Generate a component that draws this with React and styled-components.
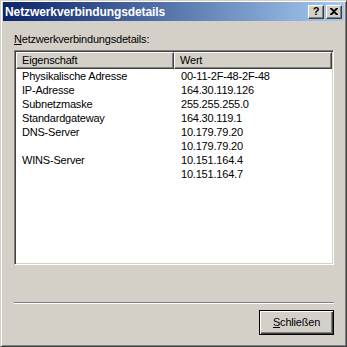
import React from "react";
import styled, { createGlobalStyle } from "styled-components";

const Global = createGlobalStyle`
  html, body { margin: 0; padding: 0; background: #D4D0C8; }
  * { box-sizing: border-box; }
`;

const Window = styled.div`
  width: 347px;
  height: 347px;
  background: #d4d0c8;
  border: 1px solid;
  border-color: #d4d0c8 #404040 #404040 #d4d0c8;
  box-shadow: inset 1px 1px #ffffff, inset -1px -1px #808080;
  padding: 1px 2px 2px 2px;
  display: flex;
  flex-direction: column;
  font-family: "Liberation Sans", Arial, sans-serif;
  font-size: 11px;
  letter-spacing: -0.2px;
  color: #000;
`;

const TitleBar = styled.div`
  height: 19px;
  flex: none;
  display: flex;
  align-items: center;
  padding: 0 2px 0 2px;
  background: linear-gradient(to right, #0a246a, #a6caf0);
`;

const Title = styled.div`
  flex: 1;
  color: #fff;
  font-weight: bold;
  font-size: 12px;
  letter-spacing: -0.1px;
  white-space: nowrap;
`;

const TitleButtons = styled.div`
  display: flex;
  gap: 2px;
`;

const CaptionButton = styled.div`
  width: 16px;
  height: 14px;
  background: #d4d0c8;
  border: 1px solid;
  border-color: #ffffff #404040 #404040 #ffffff;
  box-shadow: inset -1px -1px #808080;
  display: flex;
  align-items: center;
  justify-content: center;
  font-weight: bold;
  font-size: 11px;
  line-height: 1;
`;

const Body = styled.div`
  flex: 1;
  display: flex;
  flex-direction: column;
  padding: 11px 10px 0 11px;
`;

const Label = styled.div`
  line-height: 14px;
  height: 14px;
  margin-bottom: 4px;
`;

const Acc = styled.span`
  text-decoration: underline;
`;

const ListBox = styled.div`
  height: 215px;
  background: #fff;
  border: 1px solid;
  border-color: #808080 #ffffff #ffffff #808080;
  box-shadow: inset 1px 1px #404040, inset -1px -1px #d4d0c8;
  padding: 1px;
  display: flex;
  flex-direction: column;
`;

const Header = styled.div`
  display: grid;
  grid-template-columns: 158px 1fr;
  height: 17px;
  flex: none;
`;

const HeaderCell = styled.div`
  background: #d4d0c8;
  border: 1px solid;
  border-color: #ffffff #404040 #404040 #ffffff;
  box-shadow: inset -1px -1px #808080;
  padding-left: 5px;
  line-height: 14px;
  white-space: nowrap;
`;

const Row = styled.div`
  display: grid;
  grid-template-columns: 158px 1fr;
  height: 14px;
  line-height: 14px;
`;

const Cell = styled.div`
  padding-left: ${(p) => p.$pad}px;
  white-space: nowrap;
`;

const Separator = styled.div`
  margin-top: 37px;
  height: 2px;
  border-top: 1px solid #808080;
  border-bottom: 1px solid #ffffff;
`;

const Footer = styled.div`
  display: flex;
  justify-content: flex-end;
  margin-top: 6px;
`;

const Button = styled.div`
  width: 75px;
  height: 25px;
  border: 1px solid #000;
  box-shadow: inset 1px 1px #ffffff, inset -1px -1px #404040, inset -2px -2px #808080;
  background: #d4d0c8;
  display: flex;
  align-items: center;
  justify-content: center;
  padding-bottom: 1px;
`;

const rows = [
  ["Physikalische Adresse", "00-11-2F-48-2F-48"],
  ["IP-Adresse", "164.30.119.126"],
  ["Subnetzmaske", "255.255.255.0"],
  ["Standardgateway", "164.30.119.1"],
  ["DNS-Server", "10.179.79.20"],
  ["", "10.179.79.20"],
  ["WINS-Server", "10.151.164.4"],
  ["", "10.151.164.7"],
];

export default function App() {
  return (
    <>
      <Global />
      <Window>
        <TitleBar>
          <Title>Netzwerkverbindungsdetails</Title>
          <TitleButtons>
            <CaptionButton>?</CaptionButton>
            <CaptionButton>
              <svg width="8" height="7" viewBox="0 0 8 7">
                <path d="M0 0h2l2 2 2-2h2v1L5 3.5 8 6v1H6L4 5 2 7H0V6l3-2.5L0 1z" fill="#000" />
              </svg>
            </CaptionButton>
          </TitleButtons>
        </TitleBar>
        <Body>
          <Label>
            <Acc>N</Acc>etzwerkverbindungsdetails:
          </Label>
          <ListBox>
            <Header>
              <HeaderCell>Eigenschaft</HeaderCell>
              <HeaderCell>Wert</HeaderCell>
            </Header>
            {rows.map(([k, v], i) => (
              <Row key={i}>
                <Cell $pad={6}>{k}</Cell>
                <Cell $pad={7}>{v}</Cell>
              </Row>
            ))}
          </ListBox>
          <Separator />
          <Footer>
            <Button>
              <span>
                <Acc>S</Acc>chließen
              </span>
            </Button>
          </Footer>
        </Body>
      </Window>
    </>
  );
}
